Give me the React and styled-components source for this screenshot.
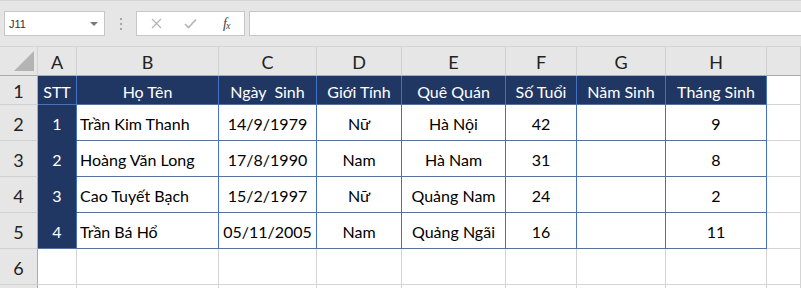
import styled, { createGlobalStyle } from "styled-components";

const GlobalStyle = createGlobalStyle`
  html, body {
    margin: 0;
    padding: 0;
    background: #ffffff;
  }
  body {
    font-family: Lato, "Noto Sans", sans-serif;
    overflow: hidden;
  }
`;

const columns = ["A", "B", "C", "D", "E", "F", "G", "H"];

const header = ["STT", "Họ Tên", "Ngày  Sinh", "Giới Tính", "Quê Quán", "Số Tuổi", "Năm Sinh", "Tháng Sinh"];

const rows = [
  ["1", "Trần Kim Thanh", "14/9/1979", "Nữ", "Hà Nội", "42", "", "9"],
  ["2", "Hoàng Văn Long", "17/8/1990", "Nam", "Hà Nam", "31", "", "8"],
  ["3", "Cao Tuyết Bạch", "15/2/1997", "Nữ", "Quảng Nam", "24", "", "2"],
  ["4", "Trần Bá Hổ", "05/11/2005", "Nam", "Quảng Ngãi", "16", "", "11"],
];

const Page = styled.div`
  width: 801px;
  height: 288px;
  overflow: hidden;
  background: #e6e6e6;
`;

const Toolbar = styled.div`
  display: flex;
  align-items: flex-start;
  height: 47px;
  box-sizing: border-box;
  padding: 10px 0 0 4px;
  border-top: 1px solid #d6d6d6;
  border-bottom: 1px solid #d4d4d4;
  background: #e6e6e6;
`;

const Box = styled.div`
  height: 25px;
  box-sizing: border-box;
  background: #ffffff;
  border: 1px solid #c6c6c6;
  display: flex;
  align-items: center;
`;

const NameBox = styled(Box)`
  width: 101px;
  padding: 0 6px 0 4px;
  justify-content: space-between;
  font-family: "Liberation Sans", Arial, sans-serif;
  font-size: 11px;
  color: #333;
`;

const Caret = styled.span`
  width: 0;
  height: 0;
  border-left: 4px solid transparent;
  border-right: 4px solid transparent;
  border-top: 4px solid #7a7a7a;
`;

const Grip = styled.div`
  width: 31px;
  height: 25px;
  display: flex;
  flex-direction: column;
  align-items: center;
  justify-content: center;
  gap: 3px;

  span {
    width: 2px;
    height: 2px;
    background: #a6a6a6;
  }
`;

const FxBox = styled(Box)`
  width: 109px;
  padding-left: 14px;
  gap: 22px;
`;

const Fx = styled.span`
  margin-left: 4px;
  font-family: "Liberation Serif", "Times New Roman", serif;
  font-style: italic;
  font-size: 14px;
  color: #444;
  letter-spacing: -1px;

  sub {
    font-size: 10px;
    vertical-align: -1px;
  }
`;

const FormulaInput = styled(Box)`
  flex: 1;
  margin-left: 4px;
  border-right: none;
`;

const Sheet = styled.div`
  display: grid;
  grid-template-columns: 38px 39px 142px 98px 85px 104px 71px 89px 101px 1fr;
  grid-template-rows: 29px 29px repeat(6, 36px);
  background: #ffffff;
`;

const Corner = styled.div`
  background: #e6e6e6;
  border-right: 1px solid #d4d4d4;
  border-bottom: 1px solid #ababab;
  box-sizing: border-box;
  display: flex;
  align-items: flex-end;
  justify-content: flex-end;
  padding: 0 3px 4px 0;

  &::after {
    content: "";
    width: 0;
    height: 0;
    border-left: 20px solid transparent;
    border-bottom: 20px solid #b4b4b4;
  }
`;

const ColHead = styled.div`
  background: #e6e6e6;
  border-right: 1px solid #d0d0d0;
  border-bottom: 1px solid #ababab;
  box-sizing: border-box;
  display: flex;
  align-items: center;
  justify-content: center;
  font-size: 18px;
  color: #222;
  padding-top: 2px;
`;

const RowHead = styled.div`
  background: #e6e6e6;
  border-right: 1px solid #ababab;
  border-bottom: 1px solid #d0d0d0;
  box-sizing: border-box;
  display: flex;
  align-items: center;
  justify-content: center;
  font-size: 18px;
  color: #222;
  padding-top: 2px;
`;

const Cell = styled.div`
  box-sizing: border-box;
  display: flex;
  align-items: center;
  justify-content: ${(p) => (p.$left ? "flex-start" : "center")};
  padding: ${(p) => (p.$left ? "2px 0 0 3px" : "2px 0 0 0")};
  font-size: 16px;
  white-space: pre;
  color: ${(p) => (p.$dark ? "#ffffff" : "#000000")};
  background: ${(p) => (p.$dark ? "#203764" : "#ffffff")};
  border-right: 1px solid ${(p) => (p.$table ? "#4472c4" : "#d4d4d4")};
  border-bottom: 1px solid
    ${(p) => (p.$table ? (p.$col0 ? "#203764" : "#4472c4") : "#d4d4d4")};
`;

function Toolbox() {
  return (
    <Toolbar>
      <NameBox>
        J11
        <Caret />
      </NameBox>
      <Grip>
        <span />
        <span />
        <span />
      </Grip>
      <FxBox>
        <svg width="11" height="11" viewBox="0 0 11 11">
          <path d="M1 1 L10 10 M10 1 L1 10" stroke="#b3b3b3" strokeWidth="1.2" fill="none" />
        </svg>
        <svg width="13" height="11" viewBox="0 0 13 11">
          <path d="M1 6 L4.5 9.5 L12 1.5" stroke="#b3b3b3" strokeWidth="1.6" fill="none" />
        </svg>
        <Fx>
          f<sub>x</sub>
        </Fx>
      </FxBox>
      <FormulaInput />
    </Toolbar>
  );
}

export default function App() {
  return (
    <Page>
      <GlobalStyle />
      <Toolbox />
      <Sheet>
        <Corner />
        {columns.map((c) => (
          <ColHead key={c}>{c}</ColHead>
        ))}
        <ColHead />

        <RowHead>1</RowHead>
        {header.map((h) => (
          <Cell key={h} $dark $table>
            {h}
          </Cell>
        ))}
        <Cell />

        {rows.map((r, ri) => [
          <RowHead key={"h" + ri}>{ri + 2}</RowHead>,
          ...r.map((v, ci) => (
            <Cell
              key={ri + "-" + ci}
              $table
              $dark={ci === 0}
              $col0={ci === 0 && ri < rows.length - 1}
              $left={ci === 1}
            >
              {v}
            </Cell>
          )),
          <Cell key={"e" + ri} />,
        ])}

        {[6, 7].map((n) => [
          <RowHead key={"h" + n}>{n === 6 ? n : ""}</RowHead>,
          ...columns.map((c) => <Cell key={n + c} />),
          <Cell key={"e" + n} />,
        ])}
      </Sheet>
    </Page>
  );
}
